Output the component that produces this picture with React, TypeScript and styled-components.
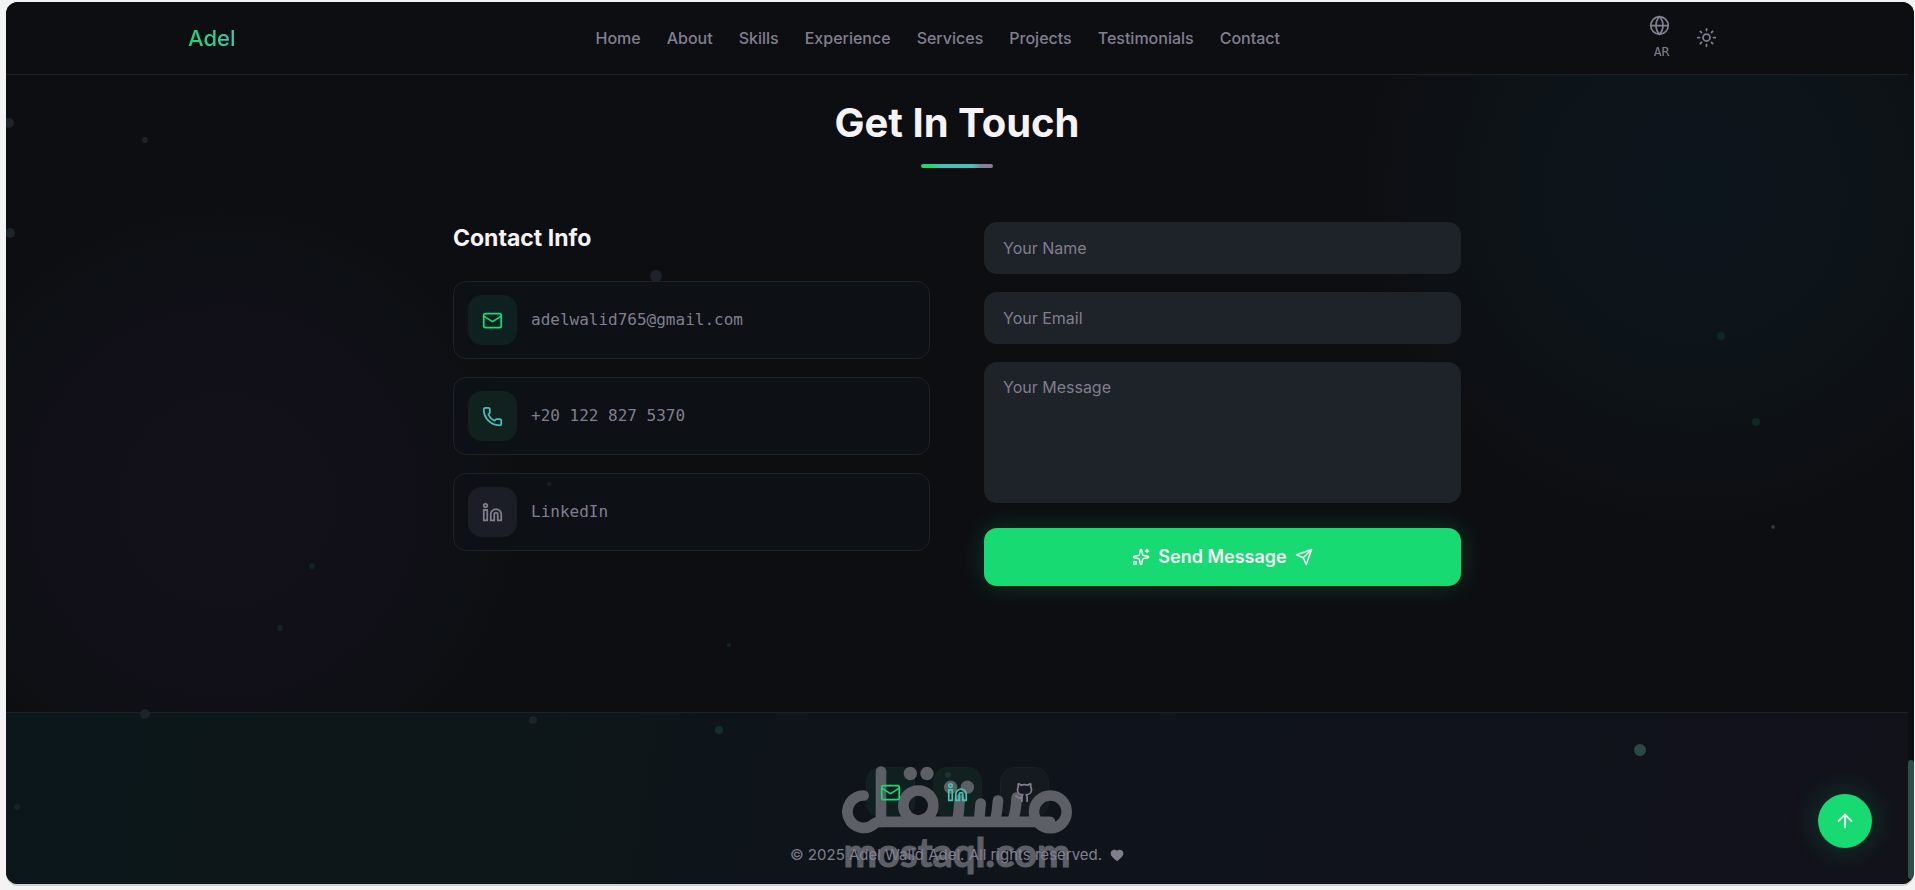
import React from "react";
import styled, { createGlobalStyle } from "styled-components";
import { ArrowUp, Github, Globe, Heart, Linkedin, Mail, Phone, Sparkles, Sun } from "lucide-react";

const c = {
  bg: "#0d0e12",
  line: "#1e2129",
  field: "#1e2229",
  text: "#f5f3f6",
  muted: "#817f8f",
  green: "#18da73",
  teal: "#45c1b5",
};

const sans = `Inter, "Liberation Sans", sans-serif`;
const mono = `"DejaVu Sans Mono", "Liberation Mono", monospace`;

const GlobalStyle = createGlobalStyle`
  *, *::before, *::after { box-sizing: border-box; }
  body {
    margin: 0;
    background: #f3f3f3;
    color: ${c.text};
    font-family: ${sans};
    font-size: 16px;
    line-height: 24px;
  }
  button, input, textarea { font: inherit; }
  h1, h2, p { margin: 0; }
  a { color: inherit; text-decoration: none; }
`;

const Frame = styled.div`
  padding: 2px 1px 6px 6px;
`;

const Page = styled.div`
  position: relative;
  display: flex;
  flex-direction: column;
  min-height: calc(100vh - 8px);
  padding-right: 6px;
  overflow: hidden;
  border-radius: 12px;
  background:
    radial-gradient(circle 380px at 88.5% 190px, #0d151c 0, #0d151b 110px, #0d1317 200px, rgba(13, 14, 18, 0) 340px),
    radial-gradient(circle 340px at 218px 500px, #12111a 0, #110f18 190px, #0d1014 250px, rgba(13, 14, 18, 0) 300px),
    ${c.bg};
  box-shadow: 0 2px 0 #cdd0d0;
`;

const Header = styled.header`
  margin-right: -6px;
  padding: 0 6px 2px 0;
  background: linear-gradient(${c.line}, ${c.line}) left bottom / calc(100% - 6px) 1px no-repeat, ${c.bg};
`;

const Bar = styled.div`
  display: flex;
  align-items: center;
  justify-content: space-between;
  width: calc(100% - 364px);
  min-width: 1000px;
  height: 71px;
  margin: 0 auto;
`;

const Logo = styled.a`
  font-size: 22px;
  font-weight: 500;
  background: linear-gradient(90deg, ${c.green}, ${c.teal});
  background-clip: text;
  color: transparent;
`;

const Nav = styled.nav`
  display: flex;
  gap: 26px;
  color: ${c.muted};
  font-weight: 500;
`;

const Tools = styled.div`
  display: flex;
  align-items: center;
  gap: 8px;
  color: ${c.muted};
`;

const ToolButton = styled.button`
  display: flex;
  flex-direction: column;
  align-items: center;
  gap: 8px;
  padding: 0 9px;
  border: 0;
  background: none;
  color: inherit;
  font-family: ${mono};
  font-size: 13px;
  line-height: 16px;
  cursor: pointer;
  span { margin-left: 4px; }
`;

const Main = styled.main`
  flex: 1;
  width: 1008px;
  margin: 0 auto;
  padding: 24px 0 48px;
`;

const Title = styled.h1`
  font-size: 40px;
  line-height: 48px;
  font-weight: 700;
  text-align: center;
  &::after {
    content: "";
    display: block;
    width: 72px;
    height: 4px;
    margin: 17px auto 0;
    border-radius: 2px;
    background: linear-gradient(90deg, ${c.green} 10%, ${c.teal} 30%, ${c.teal} 72%, #868399 82%);
  }
`;

const Columns = styled.div`
  display: grid;
  grid-template-columns: 1fr 1fr;
  gap: 54px;
  margin-top: 54px;
`;

const SubTitle = styled.h2`
  margin-bottom: 27px;
  font-size: 23px;
  line-height: 32px;
  font-weight: 700;
`;

const Stack = styled.div`
  display: flex;
  flex-direction: column;
  gap: 18px;
`;

const InfoCard = styled.a`
  display: flex;
  align-items: center;
  gap: 14px;
  height: 78px;
  padding: 0 14px;
  border: 1px solid ${c.line};
  border-radius: 13px;
  background: rgba(14, 17, 23, 0.7);
  color: ${c.muted};
  font-family: ${mono};
`;

const Tile = styled.span<{ $tone: "green" | "teal" | "gray"; $outlined?: boolean }>`
  display: grid;
  place-items: center;
  width: 49px;
  height: 50px;
  border-radius: 14px;
  border: ${(p) => (p.$outlined ? "1px solid #1a1f26" : "0")};
  background: ${(p) => (p.$tone === "gray" ? (p.$outlined ? "#151920" : "#1b1e26") : p.$tone === "teal" ? "#10211f" : "#0f2020")};
  color: ${(p) => (p.$tone === "green" ? c.green : p.$tone === "teal" ? c.teal : c.muted)};
  svg { position: relative; z-index: 2; }
`;

const Form = styled.form`
  display: flex;
  flex-direction: column;
  gap: 18px;
`;

const Input = styled.input`
  height: 52px;
  padding: 0 19px;
  border: 0;
  border-radius: 13px;
  background: ${c.field};
  color: ${c.text};
  &::placeholder { color: ${c.muted}; opacity: 1; }
`;

const Area = styled.textarea`
  height: 141px;
  padding: 13px 19px;
  border: 0;
  border-radius: 13px;
  background: ${c.field};
  color: ${c.text};
  resize: none;
  &::placeholder { color: ${c.muted}; opacity: 1; }
`;

const Submit = styled.button`
  display: flex;
  align-items: center;
  justify-content: center;
  gap: 8px;
  height: 58px;
  margin-top: 7px;
  border: 0;
  border-radius: 13px;
  background: ${c.green};
  box-shadow: 0 0 27px rgba(25, 220, 115, 0.2);
  color: ${c.text};
  font-size: 18px;
  font-weight: 600;
  cursor: pointer;
`;

const Footer = styled.footer`
  position: relative;
  display: flex;
  flex-direction: column;
  align-items: center;
  gap: 26px;
  padding: 54px 0 17px;
  border-top: 1px solid ${c.line};
  background: linear-gradient(100deg, #0c171b 0%, #0d1719 25%, #0f141b 45%, #10131b 75%, #12121b 100%);
`;

const Socials = styled.div`
  display: flex;
  gap: 18px;
`;

const Copyright = styled.p`
  position: relative;
  z-index: 2;
  display: flex;
  align-items: center;
  gap: 8px;
  color: ${c.muted};
  font-size: 15px;
`;

const Watermark = styled.div`
  position: absolute;
  z-index: 1;
  top: 53px;
  left: 50%;
  width: 230px;
  margin-left: -115px;
  color: #5c5f66;
  font: 700 40px/36px Lato, sans-serif;
  -webkit-text-stroke: 1px #5c5f66;
  text-align: center;
  pointer-events: none;
  svg { display: block; width: 230px; height: 68px; }
`;

const Particles = styled.svg`
  position: absolute;
  inset: 0;
  z-index: 3;
  width: 100%;
  height: 100%;
  pointer-events: none;
`;

const ScrollThumb = styled.div`
  position: absolute;
  right: 0;
  bottom: 5px;
  width: 6px;
  height: 119px;
  border-radius: 3px;
  background: #2b5148;
`;

const ToTop = styled.button`
  position: absolute;
  z-index: 4;
  right: 42px;
  bottom: 36px;
  display: grid;
  place-items: center;
  width: 54px;
  height: 54px;
  border: 0;
  border-radius: 50%;
  background: ${c.green};
  box-shadow: 0 0 28px 4px rgba(25, 220, 115, 0.16);
  color: ${c.text};
  cursor: pointer;
`;

const links = ["Home", "About", "Skills", "Experience", "Services", "Projects", "Testimonials", "Contact"];

const dots: [number, number, number, string][] = [
  [3, 121, 5, "#1e2229"],
  [139, 138, 3, "#1e2529"],
  [4, 231, 5, "#1b2529"],
  [650, 274, 6, "#1e222a"],
  [543, 482, 2, "#1b2326"],
  [306, 564, 3, "#122621"],
  [274, 626, 3, "#0f2720"],
  [723, 643, 2, "#0f2720"],
  [139, 712, 5, "#1e2229"],
  [527, 718, 4, "#1e2229"],
  [713, 728, 4, "#10302a"],
  [11, 805, 3, "#10261f"],
  [942, 773, 3, "#1b3531"],
  [1715, 334, 4, "#102823"],
  [1750, 420, 4, "#0f2822"],
  [1767, 525, 2, "#2b3a3a"],
  [1634, 748, 6, "#274b44"],
];

function SendIcon() {
  return (
    <svg width="18" height="18" viewBox="0 0 24 24" fill="none" stroke="currentColor" strokeWidth="2" strokeLinecap="round" strokeLinejoin="round" aria-hidden="true">
      <path d="m22 2-7 20-4-9-9-4Z" />
      <path d="M22 2 11 13" />
    </svg>
  );
}

function Wordmark() {
  return (
    <svg viewBox="216 78 690 203" aria-hidden="true">
      <g fill="none" stroke="currentColor" strokeWidth="32" strokeLinecap="round">
        <path d="M281 166A48.500 48.500 0 1 0 315 249Q320 245 333 245H840" />
        <path d="M333 94V245" />
        <circle cx="445" cy="196" r="45" />
        <circle cx="841" cy="215" r="49" />
        <path d="M569 178Q567 215 562 244M632 190L627 244M684 181Q682 215 675 244M740 172Q738 215 727 244" />
      </g>
      <g fill="currentColor">
        <circle cx="421" cy="100" r="20" />
        <circle cx="471" cy="100" r="20" />
        <circle cx="542" cy="141" r="20" />
        <circle cx="592" cy="141" r="20" />
      </g>
    </svg>
  );
}

export default function App() {
  return (
    <Frame>
      <GlobalStyle />
      <Page>
        <Header>
          <Bar>
            <Logo href="#home">Adel</Logo>
            <Nav aria-label="Main">
              {links.map((l) => <a key={l} href={`#${l.toLowerCase()}`}>{l}</a>)}
            </Nav>
            <Tools>
              <ToolButton type="button"><Globe size={21} /><span>AR</span></ToolButton>
              <ToolButton type="button" aria-label="Light theme"><Sun size={21} /></ToolButton>
            </Tools>
          </Bar>
        </Header>
        <Main>
          <Title>Get In Touch</Title>
          <Columns>
            <section>
              <SubTitle>Contact Info</SubTitle>
              <Stack>
                <InfoCard href="mailto:adelwalid765@gmail.com">
                  <Tile $tone="green"><Mail size={21} /></Tile>
                  adelwalid765@gmail.com
                </InfoCard>
                <InfoCard href="tel:+201228275370">
                  <Tile $tone="teal"><Phone size={21} /></Tile>
                  +20 122 827 5370
                </InfoCard>
                <InfoCard href="#linkedin">
                  <Tile $tone="gray"><Linkedin size={21} /></Tile>
                  LinkedIn
                </InfoCard>
              </Stack>
            </section>
            <Form>
              <Input type="text" placeholder="Your Name" aria-label="Your Name" />
              <Input type="email" placeholder="Your Email" aria-label="Your Email" />
              <Area placeholder="Your Message" aria-label="Your Message" />
              <Submit type="button"><Sparkles size={18} />Send Message<SendIcon /></Submit>
            </Form>
          </Columns>
        </Main>
        <Footer>
          <Socials>
            <a href="#mail" aria-label="Email"><Tile $tone="green" $outlined><Mail size={21} /></Tile></a>
            <a href="#linkedin" aria-label="LinkedIn"><Tile $tone="teal" $outlined><Linkedin size={21} /></Tile></a>
            <a href="#github" aria-label="GitHub"><Tile $tone="gray" $outlined><Github size={21} /></Tile></a>
          </Socials>
          <Copyright>
            © 2025 Adel Walid Adel. All rights reserved.
            <Heart size={14} fill="currentColor" />
          </Copyright>
          <Watermark><Wordmark />mostaql.com</Watermark>
        </Footer>
        <Particles aria-hidden="true">
          {dots.map(([x, y, r, fill]) => (
            <circle key={`${x}-${y}`} cx={`${(x / 1908) * 100}%`} cy={y} r={r} fill={fill} />
          ))}
        </Particles>
        <ToTop type="button" aria-label="Back to top"><ArrowUp size={22} /></ToTop>
        <ScrollThumb />
      </Page>
    </Frame>
  );
}
